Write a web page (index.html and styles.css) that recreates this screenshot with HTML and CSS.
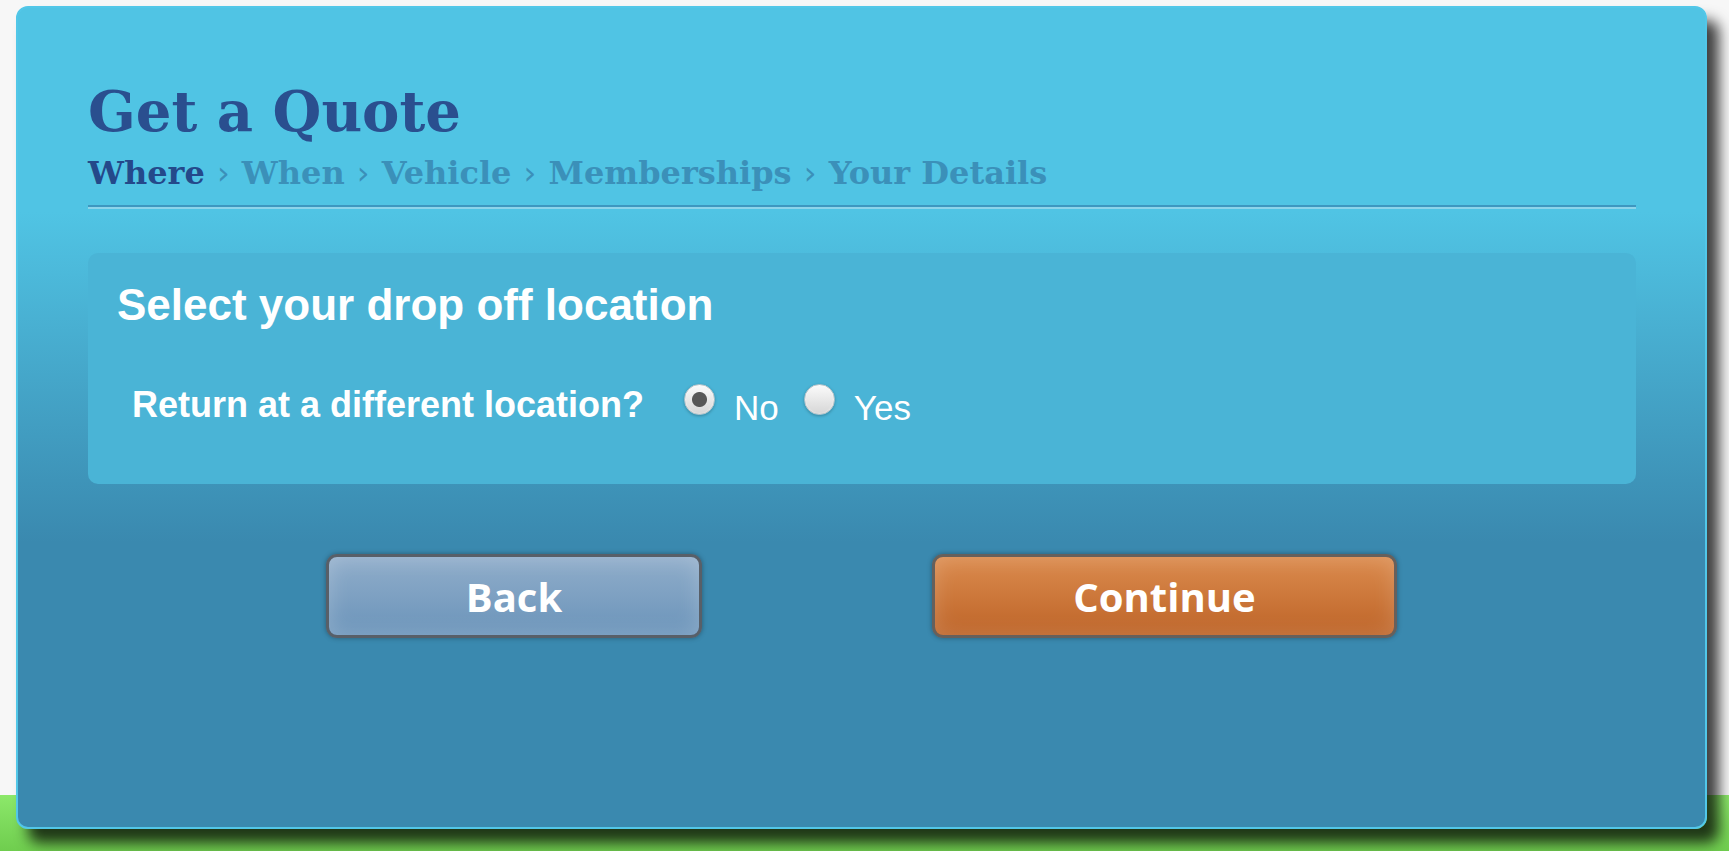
FILE: index.html
```html
<!DOCTYPE html>
<html lang="en">
<head>
  <meta charset="UTF-8" />
  <title>Get a Quote</title>
  <link rel="stylesheet" href="styles.css">
</head>
<body>

  <div class="quote-panel">
    <h1 class="quote-title">Get a Quote</h1>
    <div class="steps">
      <span class="step current">Where</span>
      <span class="sep">&rsaquo;</span>
      <span class="step">When</span>
      <span class="sep">&rsaquo;</span>
      <span class="step">Vehicle</span>
      <span class="sep">&rsaquo;</span>
      <span class="step">Memberships</span>
      <span class="sep">&rsaquo;</span>
      <span class="step">Your Details</span>
    </div>
    <hr class="divider">

    <div class="form-box">
      <h3>Select your drop off location</h3>
      <div class="field-row">
        <span class="field-label">Return at a different location?</span>
        <label class="radio-opt">
          <input type="radio" name="diffloc" value="no" checked>
          <span>No</span>
        </label>
        <label class="radio-opt">
          <input type="radio" name="diffloc" value="yes">
          <span>Yes</span>
        </label>
      </div>
    </div>

    <div class="button-row">
      <button class="btn btn-back">Back</button>
      <button class="btn btn-continue">Continue</button>
    </div>
  </div>

</body>
</html>
```

FILE: styles.css
```css
body {
    margin: 0;
    padding: 6px 0 0 16px;
    height: 851px;
    box-sizing: border-box;
    overflow: hidden;
    background: linear-gradient(to bottom, #f7f7f7 0, #f7f7f7 795px, #8ce86a 795px, #6fcd4e 100%);
    font-family: "Liberation Sans", Arial, sans-serif;
}

.quote-panel {
    width: 1691px;
    height: 823px;
    box-sizing: border-box;
    padding: 70px 69px 0 70px;
    border: 2px solid #52c7e8;
    border-radius: 12px;
    background: linear-gradient(to bottom, #50c4e4 0, #50c4e4 204px, #3a89af 534px, #3a89af 100%);
    box-shadow: 12px 14px 14px rgba(0, 0, 0, 0.75);
}

.quote-title {
    margin: 0;
    font-family: "DejaVu Serif", serif;
    font-size: 56px;
    line-height: 67px;
    font-weight: 700;
    color: #2a4f8f;
}

.steps {
    margin-top: 8px;
    font-family: "DejaVu Serif", serif;
    font-size: 32px;
    line-height: 40px;
    font-weight: 700;
    color: #3b90b9;
    white-space: nowrap;
}

.steps .current {
    color: #24498a;
}

.steps .sep {
    font-family: "DejaVu Sans", sans-serif;
    font-weight: 400;
    margin: 0 1px;
}

.divider {
    margin: 12px 0 0 0;
    height: 0;
    border: none;
    border-top: 2px solid #3d97c0;
    border-bottom: 2px solid #8dd4ea;
}

.form-box {
    margin-top: 44px;
    height: 231px;
    box-sizing: border-box;
    padding: 26px 30px 0 29px;
    border-radius: 10px;
    background: #4ab4d6;
    color: #fff;
}

.form-box h3 {
    margin: 0;
    font-size: 44px;
    line-height: 51px;
    font-weight: 700;
}

.field-row {
    display: flex;
    align-items: center;
    margin-top: 52px;
    padding-left: 15px;
}

.field-label {
    font-size: 36px;
    line-height: 40px;
    font-weight: 700;
    margin-right: 40px;
}

.radio-opt {
    display: flex;
    align-items: center;
    font-size: 35px;
    line-height: 40px;
    margin-right: 25px;
}

.radio-opt span {
    margin-left: 19px;
    padding-top: 6px;
}

.radio-opt input {
    -webkit-appearance: none;
    appearance: none;
    width: 31px;
    height: 31px;
    margin: 0 0 11px 0;
    border-radius: 50%;
    border: 1px solid #b9c3c8;
    background: linear-gradient(to bottom, #fbfbfb, #d6d6d6);
    box-shadow: 0 1px 3px rgba(0, 0, 0, 0.25), inset 0 0 2px rgba(255, 255, 255, 0.8);
}

.radio-opt input:checked {
    background: radial-gradient(circle, #575757 0, #575757 7px, transparent 8px), linear-gradient(to bottom, #fbfbfb, #d6d6d6);
}

.button-row {
    display: flex;
    gap: 230px;
    margin-top: 70px;
    padding-left: 238px;
}

.btn {
    height: 84px;
    border: 3px solid #585f68;
    border-radius: 11px;
    font-family: "Open Sans", sans-serif;
    font-size: 40px;
    font-weight: 700;
    color: #fff;
    cursor: pointer;
}

.btn-back {
    width: 376px;
    background: linear-gradient(to bottom, #90adca, #6b94ba);
    box-shadow: 0 0 5px rgba(0, 0, 0, 0.35), inset 0 0 22px rgba(255, 255, 255, 0.22);
}

.btn-continue {
    width: 465px;
    border-color: #66605c;
    background: linear-gradient(to bottom, #db8b4e, #be6428);
    box-shadow: 0 0 5px rgba(0, 0, 0, 0.35), inset 0 0 22px rgba(255, 255, 255, 0.18);
}
```
